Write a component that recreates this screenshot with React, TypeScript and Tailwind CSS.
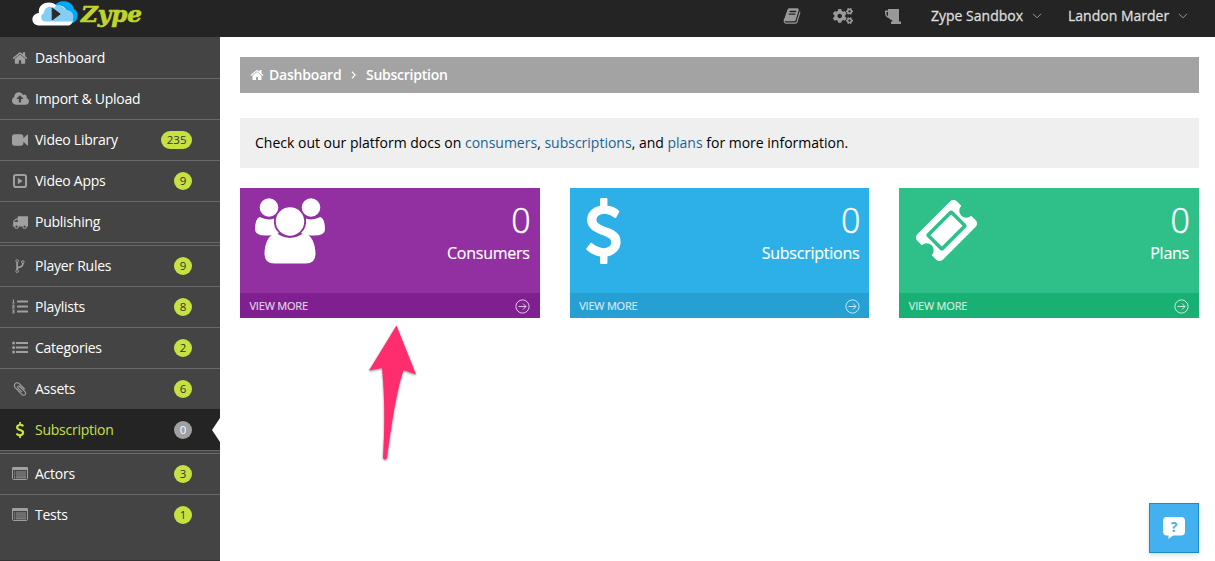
import type { ReactNode } from "react";
import { FaCogs, FaListOl } from "react-icons/fa";

const paths = {
  home: "M1472 992v480q0 26-19 45t-45 19h-384v-384h-256v384h-384q-26 0-45-19t-19-45v-480q0-1 .5-3t.5-3l575-474 575 474q1 2 1 6zm223-69l-62 74q-8 9-21 11h-3q-13 0-21-7l-692-577-692 577q-12 8-24 7-13-2-21-11l-62-74q-8-10-7-23.5t11-21.5l719-599q32-26 76-26t76 26l244 204v-195q0-14 9-23t23-9h192q14 0 23 9t9 23v408l219 182q10 8 11 21.5t-7 23.5z",
  cloud: "M1216 864q0-14-9-23l-352-352q-9-9-23-9t-23 9l-351 351q-10 12-10 24 0 14 9 23t23 9h224v352q0 13 9.5 22.5t22.5 9.5h192q13 0 22.5-9.5t9.5-22.5v-352h224q13 0 22.5-9.5t9.5-22.5zm640 288q0 159-112.5 271.5t-271.5 112.5h-1088q-185 0-316.5-131.5t-131.5-316.5q0-130 70-240t188-165q-2-30-2-43 0-212 150-362t362-150q156 0 285.5 87t188.5 231q71-62 166-62 106 0 181 75t75 181q0 76-41 138 130 31 213.5 135.5t83.5 238.5z",
  video: "M1792 352v1088q0 42-39 59-13 5-25 5-27 0-45-19l-403-403v166q0 119-84.5 203.5t-203.5 84.5h-704q-119 0-203.5-84.5t-84.5-203.5v-704q0-119 84.5-203.5t203.5-84.5h704q119 0 203.5 84.5t84.5 203.5v165l403-402q18-19 45-19 12 0 25 5 39 17 39 59z",
  truck: "M640 1408q0-52-38-90t-90-38-90 38-38 90 38 90 90 38 90-38 38-90zm-384-512h384v-256h-158q-13 0-22 9l-195 195q-9 9-9 22v30zm1280 512q0-52-38-90t-90-38-90 38-38 90 38 90 90 38 90-38 38-90zm256-1088v1024q0 15-4 26.5t-13.5 18.5-16.5 11.5-23.5 6-22.5 2-25.5 0-22.5-.5q0 106-75 181t-181 75-181-75-75-181h-384q0 106-75 181t-181 75-181-75-75-181h-64q-3 0-22.5.5t-25.5 0-22.5-2-23.5-6-16.5-11.5-13.5-18.5-4-26.5q0-26 19-45t45-19v-320q0-8-.5-35t0-38 2.5-34.5 6.5-37 14-30.5 22.5-30l198-198q19-19 50.5-32t58.5-13h160v-192q0-26 19-45t45-19h1024q26 0 45 19t19 45z",
  fork: "M672 1472q0-40-28-68t-68-28-68 28-28 68 28 68 68 28 68-28 28-68zm0-1152q0-40-28-68t-68-28-68 28-28 68 28 68 68 28 68-28 28-68zm640 128q0-40-28-68t-68-28-68 28-28 68 28 68 68 28 68-28 28-68zm96 0q0 52-26 96.5t-70 69.5q-2 287-226 414-67 38-203 81-128 40-169.5 71t-41.5 100v26q44 25 70 69.5t26 96.5q0 80-56 136t-136 56-136-56-56-136q0-52 26-96.5t70-69.5v-820q-44-25-70-69.5t-26-96.5q0-80 56-136t136-56 136 56 56 136q0 52-26 96.5t-70 69.5v497q54-26 154-57 55-17 87.5-29.5t70.5-31 59-39.5 40.5-51 28-69.5 8.5-91.5q-44-25-70-69.5t-26-96.5q0-80 56-136t136-56 136 56 56 136z",
  clip: "M1596 1385q0 117-79 196t-196 79q-135 0-235-100l-777-776q-113-115-113-271 0-159 110-270t269-111q158 0 273 113l605 606q10 10 10 22 0 16-30.5 46.5t-46.5 30.5q-13 0-23-10l-606-607q-79-77-181-77-106 0-179 75t-73 181q0 105 76 181l776 777q63 63 145 63 64 0 106-42t42-106q0-82-63-145l-581-581q-26-24-60-24-29 0-48 19t-19 48q0 32 25 59l410 410q10 10 10 22 0 16-31 47t-47 31q-12 0-22-10l-410-410q-63-61-63-149 0-82 57-139t139-57q88 0 149 63l581 581q100 98 100 235z",
  dollar: "M1362 1185q0 153-99.5 263.5t-258.5 136.5v175q0 14-9 23t-23 9h-135q-13 0-22.5-9.5t-9.5-22.5v-175q-66-9-127.5-31t-101.5-44.5-74-48-46.5-37.5-17.5-18q-17-21-2-41l103-135q7-10 23-12 15-2 24 9l2 2q113 99 243 125 37 8 74 8 81 0 142.5-43t61.5-122q0-28-15-53t-33.5-42-58.5-37.5-66-32-80-32.5q-39-16-61.5-25t-61.5-26.5-62.5-31-56.5-35.5-53.5-42.5-43.5-49-35.5-58-21-66.5-8.5-78q0-138 98-242t255-134v-180q0-13 9.5-22.5t22.5-9.5h135q14 0 23 9t9 23v176q57 6 110.5 23t87 33.5 63.5 37.5 39 29 15 14q17 18 5 38l-81 146q-8 15-23 16-14 3-27-7-3-3-14.5-12t-39-26.5-58.5-32-74.5-26-85.5-11.5q-95 0-155 43t-60 111q0 26 8.5 48t29.5 41.5 39.5 33 56 31 60.5 27 70 27.5q53 20 81 31.5t76 35 75.5 42.5 62 50 53 63.5 31.5 76.5 13 94z",
  book: "M1703 478q40 57 18 129l-275 906q-19 64-76.5 107.5t-122.5 43.5h-923q-77 0-148.5-53.5t-99.5-131.5q-24-67-2-127 0-4 3-27t4-37q1-8-3-21.5t-3-19.5q2-11 8-21t16.5-23.5 16.5-23.5q23-38 45-91.5t30-91.5q3-10 .5-30t-.5-28q3-11 17-28t17-23q21-36 42-92t25-90q1-9-2.5-32t.5-28q4-13 22-30.5t22-22.5q19-26 42.5-84.5t27.5-96.5q1-8-3-25.5t-2-26.5q2-8 9-18t18-23 17-21q8-12 16.5-30.5t15-35 16-36 19.5-32 26.5-23.5 36-11.5 47.5 5.5l-1 3q38-9 51-9h761q74 0 114 56t18 130l-274 906q-36 119-71.5 153.5t-128.5 34.5h-869q-27 0-38 15-11 16-1 43 24 70 144 70h923q29 0 56-15.5t35-41.5l300-987q7-22 5-57 38 15 59 43zm-1064 2q-4 13 2 22.5t20 9.5h608q13 0 25.5-9.5t16.5-22.5l21-64q4-13-2-22.5t-20-9.5h-608q-13 0-25.5 9.5t-16.5 22.5zm-83 256q-4 13 2 22.5t20 9.5h608q13 0 25.5-9.5t16.5-22.5l21-64q4-13-2-22.5t-20-9.5h-608q-13 0-25.5 9.5t-16.5 22.5z",
  ticket: "M1024 452l316 316-572 572-316-316zm-211 979l618-618q19-19 19-45t-19-45l-362-362q-18-18-45-18t-45 18l-618 618q-19 19-19 45t19 45l362 362q18 18 45 18t45-18zm889-637l-907 908q-37 37-90.5 37t-90.5-37l-126-126q56-56 56-136t-56-136-136-56-136 56l-125-126q-37-37-37-90.5t37-90.5l907-906q37-37 90.5-37t90.5 37l125 125q-56 56-56 136t56 136 136 56 136-56l126 125q37 37 37 90.5t-37 90.5z",
};

function Glyph({ d, className = "size-4", box = "0 0 1792 1792" }: { d: string; className?: string; box?: string }) {
  return (
    <svg viewBox={box} className={`shrink-0 ${className}`} fill="currentColor">
      <path d={d} />
    </svg>
  );
}

const PlaySquare = () => (
  <svg viewBox="0 0 14 14" className="size-3.5" fill="none">
    <rect x="1" y="1" width="12" height="12" rx="1.8" stroke="currentColor" strokeWidth="2" />
    <path d="M4.8 3.8v6.4l4.9-3.2z" fill="currentColor" />
  </svg>
);

const Bullets = () => (
  <svg viewBox="0 0 16 13" className="-mt-0.5 h-[13px] w-4" fill="currentColor">
    <circle cx="1.6" cy="2" r="1.5" />
    <circle cx="1.6" cy="6.5" r="1.5" />
    <circle cx="1.6" cy="11" r="1.5" />
    <path d="M4 1H16v2H4zM4 5.5H16v2H4zM4 10H16v2H4z" />
  </svg>
);

const ListPanel = () => (
  <svg viewBox="0 0 16 13" className="-mt-0.5 h-[13px] w-4">
    <rect x=".5" y=".5" width="15" height="12" rx="1.2" fill="none" stroke="currentColor" />
    <path d="M0 1.3Q0 0 1.3 0h13.4Q16 0 16 1.3V3H0z" fill="currentColor" />
    <path d="M2 5h1.2M4 5h10M2 7h1.2M4 7h10M2 9h1.2M4 9h10M2 10.8h1.2M4 10.8h10" stroke="currentColor" strokeWidth=".9" />
  </svg>
);

type Item = { label: string; icon: ReactNode; count?: number; active?: boolean };

const groups: Item[][] = [
  [
    { label: "Dashboard", icon: <Glyph d={paths.home} /> },
    { label: "Import & Upload", icon: <Glyph d={paths.cloud} box="-64 0 1920 1792" className="h-4 w-[17px]" /> },
    { label: "Video Library", icon: <Glyph d={paths.video} />, count: 235 },
    { label: "Video Apps", icon: <PlaySquare />, count: 9 },
    { label: "Publishing", icon: <Glyph d={paths.truck} /> },
  ],
  [
    { label: "Player Rules", icon: <Glyph d={paths.fork} />, count: 9 },
    { label: "Playlists", icon: <FaListOl className="-mt-0.5 h-[17px] w-4" />, count: 8 },
    { label: "Categories", icon: <Bullets />, count: 2 },
    { label: "Assets", icon: <Glyph d={paths.clip} />, count: 6 },
    { label: "Subscription", icon: <Glyph d={paths.dollar} />, count: 0, active: true },
  ],
  [
    { label: "Actors", icon: <ListPanel />, count: 3 },
    { label: "Tests", icon: <ListPanel />, count: 1 },
  ],
];

function Row({ item }: { item: Item }) {
  return (
    <a
      className={`relative flex h-[41px] items-center border-t pr-7 pl-3 text-sm ${
        item.active
          ? "border-[#242424] bg-[#242424] text-[#c5e343]"
          : item.label === "Dashboard"
            ? "border-[#444] text-white"
            : "border-[#696969] text-white"
      }`}
    >
      <span className={`flex w-4 shrink-0 items-center justify-center ${item.active ? "" : "text-[#a0a0a0]"}`}>{item.icon}</span>
      <span className="ml-[7px] flex-1 whitespace-nowrap tracking-[-0.25px]">{item.label}</span>
      {item.count !== undefined && (
        <span
          className={`flex h-[18px] min-w-[18px] items-center justify-center rounded-full text-[11.5px] ${
            item.count > 9 ? "px-[5.5px]" : ""
          } ${item.active ? "bg-[#a0a0a0] text-white" : "bg-[#c6e240] text-[#333]"}`}
        >
          {item.count}
        </span>
      )}
      {item.active && (
        <svg viewBox="0 0 8 24" className="absolute top-2 right-0 h-6 w-2">
          <path d="M8 0v24L0 12z" fill="#fff" />
        </svg>
      )}
    </a>
  );
}

const Chevron = () => (
  <svg viewBox="0 0 10 6" className="h-1.5 w-2.5" fill="none">
    <path d="M1 .8l4 4 4-4" stroke="#999" />
  </svg>
);

const Mug = () => (
  <svg viewBox="0 0 16 15" className="h-[15px] w-4" fill="currentColor">
    <path d="M3 0h11v12.500h2V15H6v-2.500h1.200V11Q4.600 11 4 9H3Q0 7.200 0 4.500V1.500h3zM3 3H1.500v2Q1.700 6.600 3 7.200z" />
  </svg>
);

function Logo() {
  return (
    <svg viewBox="0 0 112 37" className="h-[37px] w-28">
      <path d="M11 24.500C5 24.500 6 18 11 17C10 10 16 4.500 22 7C25-1 40-1 42 9C47 11 47 20 41 23Z" fill="#00a9f4" />
      <path d="M8 25.500C-2 25.500-2 14 7 13C5 3 19-1 25 6C31 4 36 10 35 14C42 15 43 25.500 35 25.500Z" fill="#fff" />
      <path d="M13 21.500C8 21 8 15 12 13C12 8 17 5 22 8C25 3 31 6 34 10C41 10 43 16 40 21.500Z" fill="#86cdf3" />
      <path d="M20.200 8v12l8-6z" fill="#2b2b2b" stroke="#2b2b2b" strokeWidth="1" strokeLinejoin="round" />
      <text
        x="49"
        y="22"
        textLength="61"
        lengthAdjust="spacingAndGlyphs"
        className="font-['DejaVu_Serif',serif] text-[23px] font-bold italic"
        fill="#bfd52b"
        stroke="#bfd52b"
        strokeWidth=".7"
      >
        Zype
      </text>
    </svg>
  );
}

const People = () => (
  <svg viewBox="0 0 70 66" className="h-[66px] w-[70px]" fill="#fff">
    <circle cx="14" cy="9.500" r="9.300" />
    <circle cx="56" cy="9.500" r="9.300" />
    <path d="M4.500 19Q13 23 19 20.500Q18 30 24 35Q21 37.500 13 37.500Q0 38 0 31.500Q0 21 4.500 19Z" />
    <path d="M65.500 19Q57 23 51 20.500Q52 30 46 35Q49 37.500 57 37.500Q70 38 70 31.500Q70 21 65.500 19Z" />
    <circle cx="35" cy="23.500" r="14.200" />
    <path d="M21.500 35.300Q35 44.500 48.500 35.300C57 36 60.500 47 60.500 56Q60.500 65.500 50.500 65.500H19.500Q9.500 65.500 9.500 56C9.500 47 13 36 21.500 35.300Z" />
  </svg>
);

const CircleArrow = () => (
  <svg viewBox="0 0 15 15" className="size-[15px]" fill="none" stroke="currentColor">
    <circle cx="7.500" cy="7.500" r="6.600" />
    <path d="M3.500 7.500h7.500M8 4.500l3 3-3 3" />
  </svg>
);

const cards = [
  { label: "Consumers", body: "bg-[#9230a1]", foot: "bg-[#801f90]", icon: <People />, pad: "pl-[15px] pt-2.5" },
  {
    label: "Subscriptions",
    body: "bg-[#2db0e8]",
    foot: "bg-[#269fd2]",
    icon: <Glyph d={paths.dollar} className="h-[66px] w-[35px]" box="425 0 945 1792" />,
    pad: "pl-4 pt-2.5",
  },
  {
    label: "Plans",
    body: "bg-[#2fbf88]",
    foot: "bg-[#19b074]",
    icon: <Glyph d={paths.ticket} className="size-[65px]" />,
    pad: "pl-[15px] pt-2.5",
  },
];

export default function App() {
  return (
    <div className="flex h-[561px] w-[1215px] flex-col overflow-hidden bg-white font-['Open_Sans',sans-serif]">
      <header className="flex h-[37px] shrink-0 items-center justify-between bg-[#242424] pl-8">
        <Logo />
        <nav className="flex h-full items-center pr-[27px] pb-[5px] text-sm text-[#ddd]">
          <span className="mr-8 text-[#999]"><Glyph d={paths.book} className="size-[18px]" /></span>
          <span className="mr-8 text-[#999]"><FaCogs className="size-5" /></span>
          <span className="mr-[30px] text-[#999]"><Mug /></span>
          <span className="mr-[7px] w-[94px] whitespace-nowrap [-webkit-text-stroke:0.3px]">Zype Sandbox</span>
          <span className="mr-[26px]"><Chevron /></span>
          <span className="mr-2 w-[102px] whitespace-nowrap [-webkit-text-stroke:0.3px]">Landon Marder</span>
          <Chevron />
        </nav>
      </header>
      <div className="flex min-h-0 flex-1">
        <aside className="flex w-[220px] shrink-0 flex-col gap-[3px] border-b border-[#333] bg-[#444]">
          {groups.map((group, i) => (
            <div key={i} className={i === 0 ? "" : "-mt-px"}>
              {group.map((item) => (
                <Row key={item.label} item={item} />
              ))}
              {i < groups.length - 1 && <div className="h-px bg-[#696969]" />}
            </div>
          ))}
        </aside>
        <main className="relative flex-1 pt-5 pr-4 pl-5">
          <div className="flex h-9 items-center bg-[#a3a3a3] px-2.5 text-sm font-semibold text-white">
            <Glyph d={paths.home} className="size-[14px]" />
            <span className="ml-[5px] w-[73px] tracking-[-0.2px] whitespace-nowrap">Dashboard</span>
            <svg viewBox="0 0 5 9" className="mr-2.5 ml-[9px] h-2 w-[5px]" fill="none" stroke="#fff" strokeWidth="1.3">
              <path d="M.7.7l3.600 3.800L.7 8.300" />
            </svg>
            <span className="tracking-[-0.25px]">Subscription</span>
          </div>
          <p className="mt-[25px] flex h-[50px] items-center bg-[#efefef] px-[15px] text-sm text-black">
            <span>
              Check out our platform docs on <a className="text-[#1a6495]">consumers</a>, <a className="text-[#1a6495]">subscriptions</a>, and{" "}
              <a className="text-[#1a6495]">plans</a> for more information.
            </span>
          </p>
          <div className="mt-5 grid grid-cols-3 gap-[30px]">
            {cards.map((card) => (
              <section key={card.label} className={`flex h-[130px] flex-col text-white ${card.body}`}>
                <div className={`flex flex-1 items-start justify-between pr-[9px] ${card.pad}`}>
                  {card.icon}
                  <div className="pt-1 text-right">
                    <div className="text-[34px] leading-9 font-light [-webkit-text-stroke:0.5px]">0</div>
                    <div className="mt-1 pr-px text-base leading-[22px] tracking-[-0.25px] [-webkit-text-stroke:0.15px]">{card.label}</div>
                  </div>
                </div>
                <div className={`flex h-[25px] items-center justify-between pt-px pr-[9.500px] pl-[9.500px] text-[11px] text-white/75 ${card.foot}`}>
                  <span className="pt-px tracking-[-0.2px] [-webkit-text-stroke:0.2px]">VIEW MORE</span>
                  <CircleArrow />
                </div>
              </section>
            ))}
          </div>
          <svg viewBox="0 0 56 142" className="absolute top-[286px] left-[145px] h-[142px] w-14 drop-shadow-[0_1px_1px_rgba(0,0,0,0.45)]">
            <path d="M31.500 2.500L51 51.500L38.500 47Q30 72 22 135Q20 138 18 135Q21 85 17 45L4 47.500Z" fill="#ff2d6e" />
          </svg>
          <button className="absolute right-4 bottom-2 flex size-[50px] items-center justify-center border border-[#1b8bc9] bg-[#43b1ef] shadow-[0_2px_4px_rgba(0,0,0,0.15)]">
            <svg viewBox="0 0 22 22" className="size-[22px]">
              <path d="M4 0h14q4 0 4 4v10.500q0 4-4 4H10L5.500 22v-3.500H4q-4 0-4-4V4Q0 0 4 0z" fill="#fff" />
              <text x="11" y="14.500" textAnchor="middle" className="text-[14px] font-bold" fill="#43b1ef">?</text>
            </svg>
          </button>
        </main>
      </div>
    </div>
  );
}
